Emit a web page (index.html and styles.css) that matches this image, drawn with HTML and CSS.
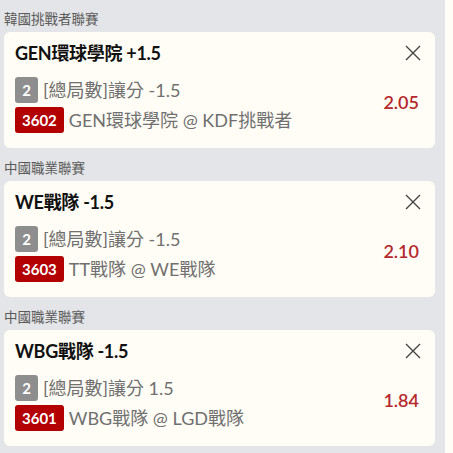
FILE: index.html
```html
<!DOCTYPE html>
<html lang="zh-Hant">
<head>
    <meta charset="UTF-8">
    <meta name="viewport" content="width=device-width, initial-scale=1.0">
    <title>Bet Slip</title>
    <link rel="stylesheet" href="styles.css">
</head>
<body>
    <div class="page">
        <div class="slip-list">
            <div class="league">韓國挑戰者聯賽</div>
            <div class="bet-card">
                <div class="bet-head">
                    <div class="bet-title">GEN環球學院 +1.5</div>
                    <button class="close-btn" type="button" aria-label="remove">
                        <svg width="16" height="16" viewBox="0 0 16 16"><path d="M1 1L15 15M15 1L1 15" stroke="#444" stroke-width="1.4" fill="none"/></svg>
                    </button>
                </div>
                <div class="bet-body">
                    <div class="bet-lines">
                        <div class="bet-line"><span class="tag tag-grey">2</span><span class="line-text">[總局數]讓分 -1.5</span></div>
                        <div class="bet-line"><span class="tag tag-red">3602</span><span class="line-text">GEN環球學院 @ KDF挑戰者</span></div>
                    </div>
                    <div class="odds">2.05</div>
                </div>
            </div>

            <div class="league">中國職業聯賽</div>
            <div class="bet-card">
                <div class="bet-head">
                    <div class="bet-title">WE戰隊 -1.5</div>
                    <button class="close-btn" type="button" aria-label="remove">
                        <svg width="16" height="16" viewBox="0 0 16 16"><path d="M1 1L15 15M15 1L1 15" stroke="#444" stroke-width="1.4" fill="none"/></svg>
                    </button>
                </div>
                <div class="bet-body">
                    <div class="bet-lines">
                        <div class="bet-line"><span class="tag tag-grey">2</span><span class="line-text">[總局數]讓分 -1.5</span></div>
                        <div class="bet-line"><span class="tag tag-red">3603</span><span class="line-text">TT戰隊 @ WE戰隊</span></div>
                    </div>
                    <div class="odds">2.10</div>
                </div>
            </div>

            <div class="league">中國職業聯賽</div>
            <div class="bet-card">
                <div class="bet-head">
                    <div class="bet-title">WBG戰隊 -1.5</div>
                    <button class="close-btn" type="button" aria-label="remove">
                        <svg width="16" height="16" viewBox="0 0 16 16"><path d="M1 1L15 15M15 1L1 15" stroke="#444" stroke-width="1.4" fill="none"/></svg>
                    </button>
                </div>
                <div class="bet-body">
                    <div class="bet-lines">
                        <div class="bet-line"><span class="tag tag-grey">2</span><span class="line-text">[總局數]讓分 1.5</span></div>
                        <div class="bet-line"><span class="tag tag-red">3601</span><span class="line-text">WBG戰隊 @ LGD戰隊</span></div>
                    </div>
                    <div class="odds">1.84</div>
                </div>
            </div>
        </div>
        <div class="rail"></div>
    </div>
</body>
</html>
```

FILE: styles.css
```css
html, body {
    margin: 0;
    padding: 0;
    height: 100%;
}

body {
    font-family: Lato, "Noto Sans CJK TC", sans-serif;
    background-color: #e4e5e8;
    overflow: hidden;
}

.page {
    display: flex;
    min-height: 100%;
}

.slip-list {
    flex: 1;
    padding: 0 10px 0 4px;
}

.rail {
    width: 8px;
    background-color: #fffdf5;
}

.league {
    padding: 11px 0 5px 0;
    font-size: 13.5px;
    line-height: 16px;
    color: #5b5b5b;
}

.bet-card {
    background-color: #fffdf5;
    border-radius: 6px;
    padding: 9px 14px 15px 11px;
    margin-bottom: 1px;
}

.bet-head {
    display: flex;
    justify-content: space-between;
    align-items: center;
    height: 24px;
}

.bet-title {
    font-size: 18px;
    font-weight: 700;
    line-height: 24px;
    color: #111;
    letter-spacing: -0.3px;
}

.close-btn {
    background: none;
    border: none;
    padding: 0;
    width: 16px;
    height: 16px;
    cursor: pointer;
}

.close-btn svg {
    display: block;
}

.bet-body {
    display: flex;
    justify-content: space-between;
    align-items: center;
    margin-top: 12px;
}

.bet-lines {
    display: flex;
    flex-direction: column;
    gap: 4px;
}

.bet-line {
    display: flex;
    align-items: center;
    gap: 5px;
    height: 26px;
}

.tag {
    display: inline-flex;
    align-items: center;
    justify-content: center;
    height: 26px;
    border-radius: 3px;
    color: white;
    font-size: 15px;
    font-weight: 700;
    box-sizing: border-box;
}

.tag-grey {
    width: 23px;
    background-color: #8e8e8e;
}

.tag-red {
    padding: 0 7px;
    background-color: #b30000;
}

.line-text {
    font-size: 18px;
    color: #707070;
    line-height: 26px;
}

.odds {
    font-size: 18px;
    font-weight: 600;
    color: #b5282c;
    padding-right: 2px;
    margin-top: -6px;
}
```
